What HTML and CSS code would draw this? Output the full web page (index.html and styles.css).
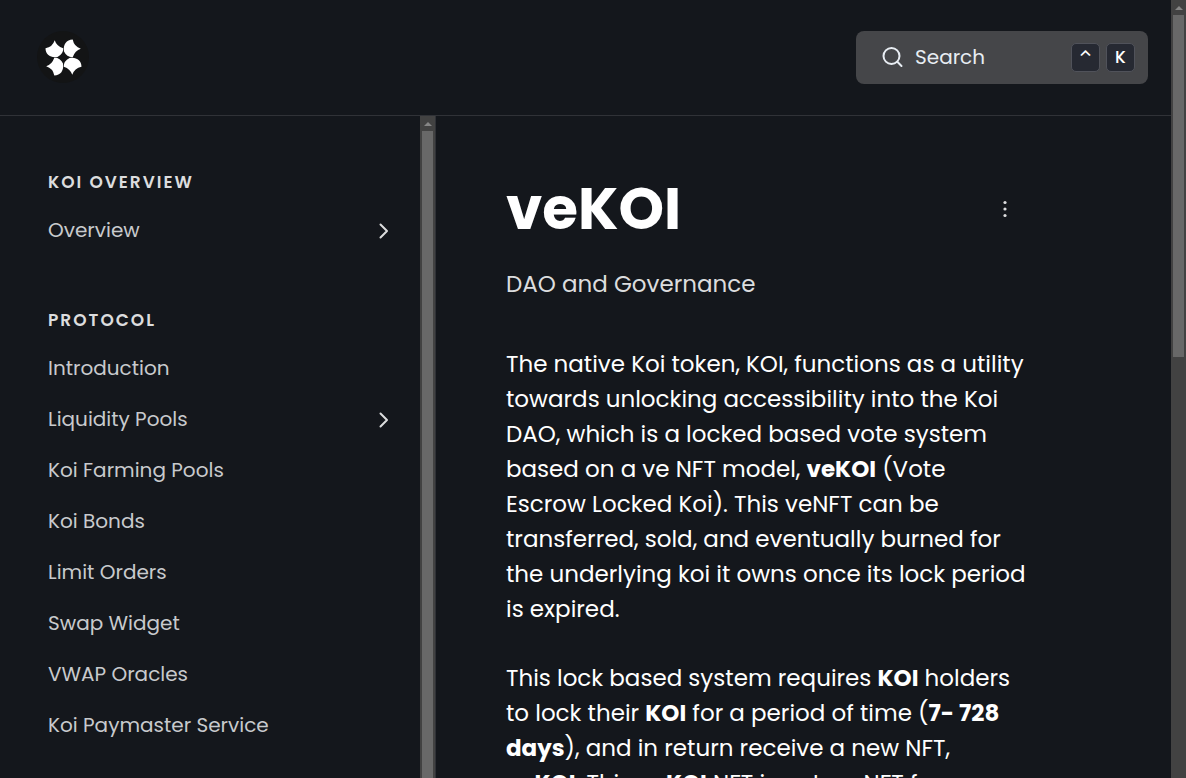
FILE: index.html
```html
<!DOCTYPE html>
<html lang="en">
<head>
<meta charset="utf-8">
<meta name="viewport" content="width=device-width, initial-scale=1">
<title>veKOI</title>
<link rel="stylesheet" href="styles.css">
</head>
<body>
<div class="app">
  <header class="header">
    <a class="logo" href="#" aria-label="Koi home">
      <svg viewBox="0 -3 70 70" width="70" height="70" aria-hidden="true">
        <defs><path id="petal" d="M24.700 15.200Q26.500 21 33.200 23.300Q33.500 29 27.500 32C20.500 33.200 15.500 29.500 15.500 23.300Q22.500 22 24.700 15.200Z"/></defs>
        <circle cx="33" cy="32" r="26" fill="#131415"/>
        <g fill="#fff">
          <use href="#petal"/>
          <use href="#petal" transform="rotate(90 33.500 32.500)"/>
          <use href="#petal" transform="rotate(180 33.500 32.500)"/>
          <use href="#petal" transform="rotate(270 33.500 32.500)"/>
        </g>
      </svg>
    </a>
    <button class="search" type="button">
      <svg class="search-icon" viewBox="0 0 22 22" width="22" height="22" aria-hidden="true"><circle cx="9.500" cy="10" r="8"/><path d="M15.300 15.800L19.500 20"/></svg>
      <span class="search-label">Search</span>
      <kbd class="key">⌃</kbd><kbd class="key">K</kbd>
    </button>
  </header>
  <div class="columns">
    <nav class="sidebar" aria-label="Documentation">
      <section class="group">
        <h2 class="group-title">KOI OVERVIEW</h2>
        <a class="item" href="#">Overview<svg class="chevron" viewBox="0 0 10 16" width="10" height="16" aria-hidden="true"><path d="M1.500 1.500L8 8L1.500 14.500"/></svg></a>
      </section>
      <section class="group">
        <h2 class="group-title">PROTOCOL</h2>
        <a class="item" href="#">Introduction</a>
        <a class="item" href="#">Liquidity Pools<svg class="chevron" viewBox="0 0 10 16" width="10" height="16" aria-hidden="true"><path d="M1.500 1.500L8 8L1.500 14.500"/></svg></a>
        <a class="item" href="#">Koi Farming Pools</a>
        <a class="item" href="#">Koi Bonds</a>
        <a class="item" href="#">Limit Orders</a>
        <a class="item" href="#">Swap Widget</a>
        <a class="item" href="#">VWAP Oracles</a>
        <a class="item" href="#">Koi Paymaster Service</a>
      </section>
    </nav>
    <div class="scrollbar" aria-hidden="true"><span class="arrow"></span><span class="thumb"></span></div>
    <main class="content">
      <article class="article">
        <div class="title-row">
          <h1 class="title">veKOI</h1>
          <button class="more" type="button" aria-label="More options"><svg viewBox="0 0 4 18" width="4" height="18" aria-hidden="true"><circle cx="2" cy="2.500" r="1.600"/><circle cx="2" cy="9" r="1.600"/><circle cx="2" cy="15.500" r="1.600"/></svg></button>
        </div>
        <p class="subtitle">DAO and Governance</p>
        <p class="text">The native Koi token, KOI, functions as a utility towards unlocking accessibility into the Koi DAO, which is a locked based vote system based on a ve NFT model, <strong>veKOI</strong> (Vote Escrow Locked Koi). This veNFT can be transferred, sold, and eventually burned for the underlying koi it owns once its lock period is expired.</p>
        <p class="text">This lock based system requires <strong>KOI</strong> holders to lock their <strong>KOI</strong> for a period of time (<strong>7- 728 days</strong>), and in return receive a new NFT, <strong>veKOI</strong>. This <strong>veKOI</strong> NFT is not an NFT for</p>
      </article>
    </main>
  </div>
</div>
<div class="scrollbar" aria-hidden="true"><span class="arrow"></span><span class="thumb thumb-page"></span></div>
</body>
</html>
```
FILE: styles.css
```css
* { box-sizing: border-box; }
body {
  margin: 0;
  height: 100vh;
  display: flex;
  overflow: hidden;
  background: #14171c;
  color: #fff;
  font-family: Poppins, Inter, sans-serif;
}
h1, h2, p { margin: 0; }
button { font: inherit; color: inherit; border: 0; cursor: pointer; }
.app { flex: 1; min-width: 0; display: flex; flex-direction: column; }
.header {
  flex: none;
  display: flex;
  align-items: center;
  justify-content: space-between;
  padding: 22px 23px 23px 30px;
  border-bottom: 1px solid #303237;
}
.logo { display: flex; }
.search {
  display: flex;
  align-items: center;
  width: 292px;
  height: 53px;
  padding: 0 13px 0 26px;
  border-radius: 8px;
  background: #454649;
  color: #e8edf3;
  font-size: 20px;
}
.search-icon { fill: none; stroke: currentColor; stroke-width: 2; stroke-linecap: round; }
.search-label { flex: 1; padding-left: 11px; text-align: left; }
.key {
  width: 29px;
  height: 29px;
  margin-left: 6px;
  border: 1px solid #50525a;
  border-radius: 5px;
  background: #262932;
  color: #fff;
  font: 500 17px/27px Poppins, Inter, sans-serif;
  text-align: center;
}
.columns { flex: 1; min-height: 0; display: flex; }
.sidebar {
  flex: none;
  width: 420px;
  overflow: hidden;
  padding: 52px 31px 0 48px;
}
.group { margin-bottom: 50px; }
.group-title {
  font-size: 17px;
  line-height: 28px;
  font-weight: 600;
  letter-spacing: 2px;
  color: #dcddde;
  margin-bottom: 9px;
}
.item {
  display: flex;
  align-items: center;
  justify-content: space-between;
  line-height: 51px;
  font-size: 20px;
  color: #c8cacd;
  text-decoration: none;
}
.chevron { fill: none; stroke: #dcddde; stroke-width: 2; stroke-linecap: round; stroke-linejoin: round; }
.scrollbar {
  flex: none;
  width: 15px;
  overflow: hidden;
  display: flex;
  flex-direction: column;
  align-items: center;
  background: #424242;
}
.arrow {
  flex: none;
  margin: 6px 0 5px;
  border: 4px solid transparent;
  border-top: 0;
  border-bottom-color: #868686;
}
.thumb { flex: 1; width: 11px; background: #686868; }
.thumb-page { flex: none; height: 44vh; }
.content {
  flex: 1;
  min-width: 0;
  overflow: hidden;
  border-left: 1px solid #303237;
  padding: 49px 143px 0 70px;
}
.title-row { display: flex; align-items: center; justify-content: space-between; }
.title { font-size: 58px; line-height: 88px; font-weight: 700; }
.more { display: flex; justify-content: center; width: 46px; padding: 12px 0; background: none; fill: #dcddde; }
.subtitle { margin: 13px 0 45px; font-size: 23px; line-height: 36px; color: #dcddde; }
.text { margin-bottom: 34px; font-size: 23px; line-height: 35px; }
```
